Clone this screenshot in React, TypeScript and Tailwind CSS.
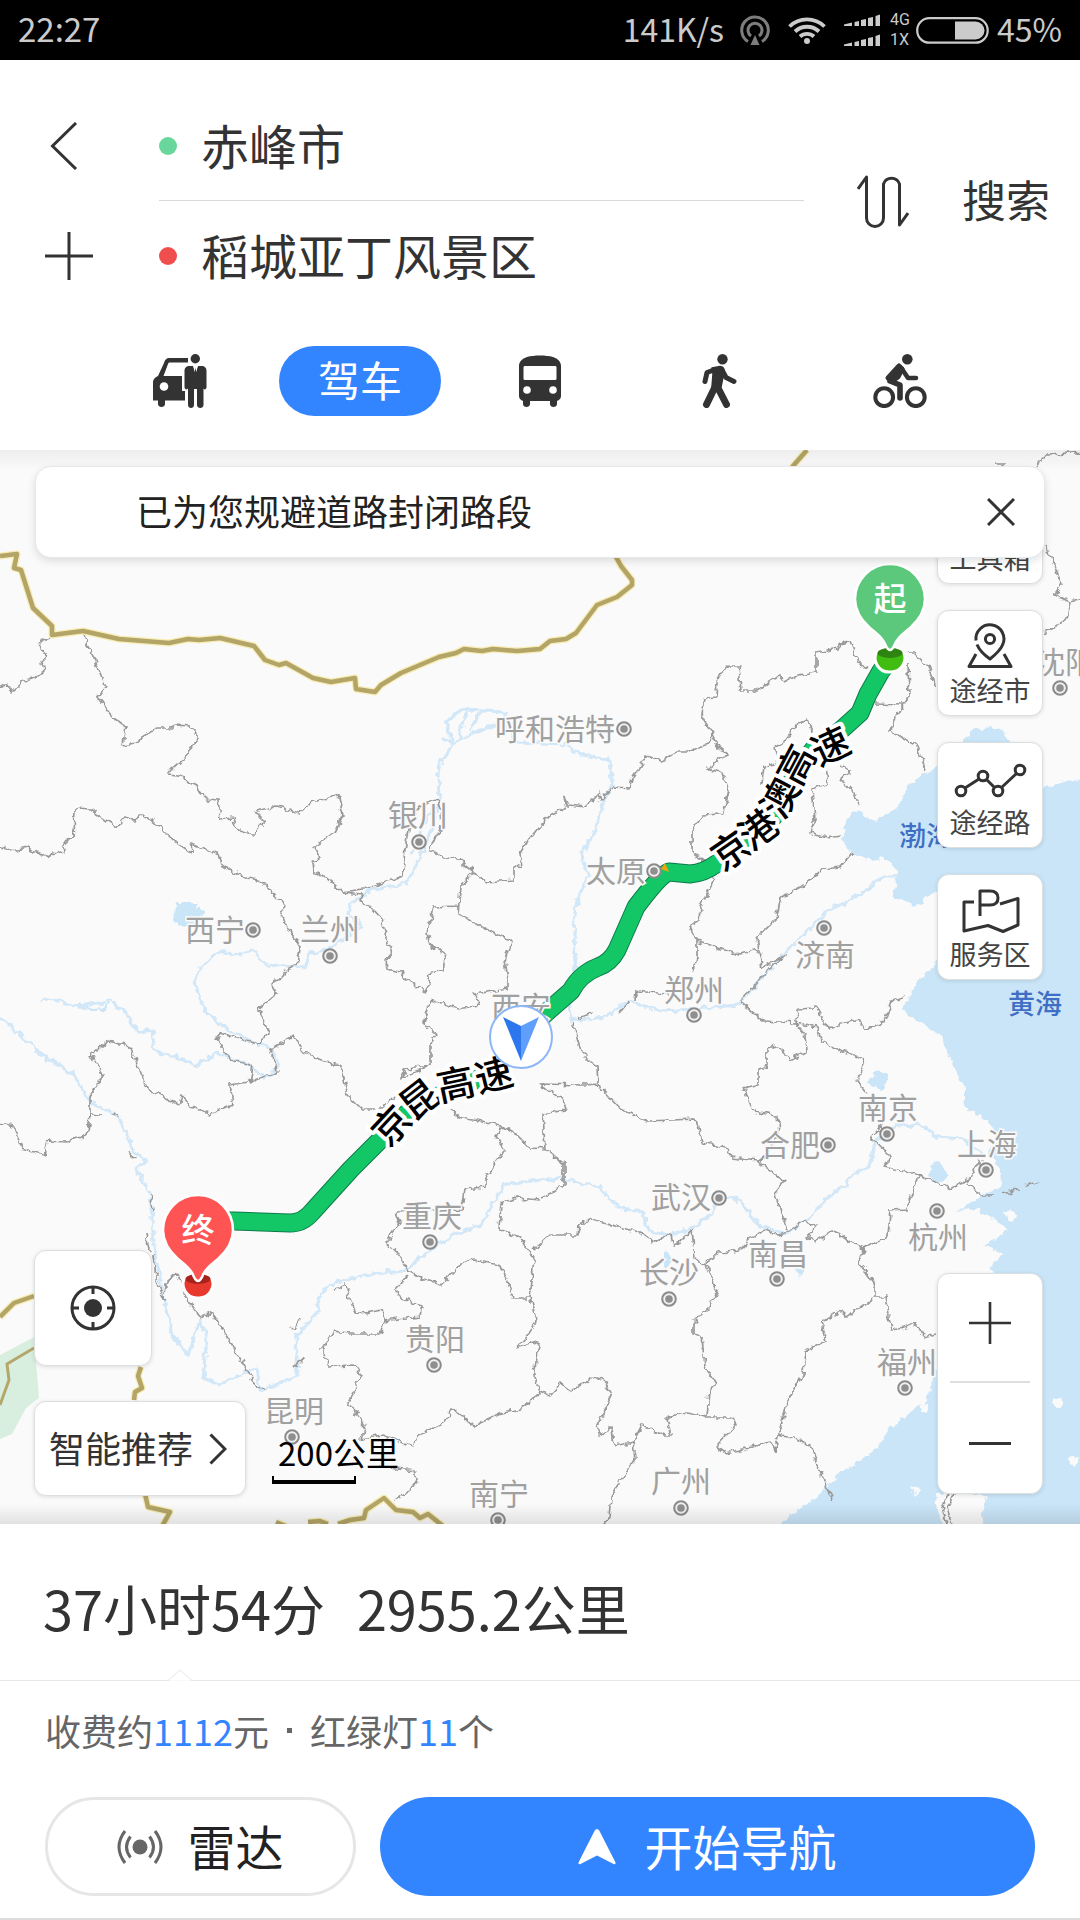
import { useState } from 'react';
import type { ReactNode } from 'react';

const fontStack = "font-['Noto_Sans_CJK_SC','Noto_Sans',sans-serif]";

type City = { name: string; x: number; y: number; dot?: [number, number] };

const cities: City[] = [
  { name: '呼和浩特', x: 555, y: 279, dot: [624, 279] },
  { name: '银川', x: 418, y: 365, dot: [419, 392] },
  { name: '西宁', x: 215, y: 480, dot: [253, 480] },
  { name: '兰州', x: 330, y: 479, dot: [330, 506] },
  { name: '太原', x: 616, y: 421, dot: [654, 421] },
  { name: '济南', x: 825, y: 505, dot: [824, 478] },
  { name: '沈阳', x: 1065, y: 212, dot: [1060, 238] },
  { name: '郑州', x: 694, y: 540, dot: [694, 565] },
  { name: '西安', x: 521, y: 557 },
  { name: '合肥', x: 790, y: 695, dot: [828, 695] },
  { name: '南京', x: 888, y: 658, dot: [887, 684] },
  { name: '上海', x: 987, y: 694, dot: [986, 720] },
  { name: '武汉', x: 681, y: 747, dot: [719, 748] },
  { name: '长沙', x: 669, y: 822, dot: [669, 849] },
  { name: '南昌', x: 778, y: 804, dot: [777, 829] },
  { name: '杭州', x: 938, y: 787, dot: [937, 761] },
  { name: '福州', x: 907, y: 912, dot: [905, 938] },
  { name: '广州', x: 681, y: 1031, dot: [681, 1058] },
  { name: '重庆', x: 432, y: 766, dot: [430, 792] },
  { name: '贵阳', x: 435, y: 889, dot: [434, 915] },
  { name: '昆明', x: 294, y: 961, dot: [292, 987] },
  { name: '南宁', x: 499, y: 1044, dot: [498, 1070] },
];

// [char, x, y, angle]
const roadNames: [string, number, number, number][] = [
  ['京', 731, 401, -35],
  ['港', 759, 380, -37],
  ['澳', 781, 348, -62],
  ['高', 797, 315, -62],
  ['速', 831, 297, -25],
  ['京', 392, 676, -47],
  ['昆', 420, 650, -38],
  ['高', 456, 635, -12],
  ['速', 494, 626, -14],
];

const sea =
  'M1110 329 1080 329 1067 331 1045 338 1010 350 985 330 1000 310 1010 290 998 278 974 279 960 293 936 319 922 324 905 338 903 350 891 362 876 371 855 360 845 376 843 391 852 403 871 410 884 408 898 421 893 445 915 457 936 441 1010 440 1025 455 985 480 936 513 919 530 902 560 922 574 940 584 953 616 965 637 965 660 983 667 1005 691 988 701 1000 719 1003 735 984 744 958 762 977 759 1008 780 984 796 1003 803 991 816 1000 850 960 900 936 919 926 951 902 969 888 980 878 998 840 1023 816 1048 788 1067 770 1090H1110Z';

const lakes = [
  'M177 453 195 453 205 464 193 474 180 476 173 467Z',
  'M867 634 876 619 888 626 884 639Z',
  'M929 716 938 710 950 725 940 734 931 728Z',
  'M795 817 805 819 800 828Z',
  'M664 801 673 809 664 820Z',
  'M83 554 96 560 110 552 104 561 92 561Z',
];

const rivers = [
  'M40 553 45 548 83 557 110 550 126 564 139 582 152 580 155 601 182 609 195 616 217 603 248 614 265 628 279 616 272 600 229 580 207 564 198 544 195 530 200 519 217 501 241 504 253 500 267 515 305 518 310 503 327 501 344 489 362 476 348 465 350 455 369 441 406 434 420 408 430 383 439 352 438 319 453 293 482 279 503 276 517 293 566 295 583 305 609 310 613 334 604 350 593 386 581 403 588 424 574 462 576 507 572 540 569 551 571 571 605 567 630 551 661 561 695 559 738 555 759 532 781 507 803 486 826 462 860 445 884 426 898 426',
  'M453 293 446 272 460 260 506 262 499 276M466 262 458 290M480 262 470 280M442 288 453 293M412 405 422 378 432 360',
  'M0 567 45 607 74 625 91 653 119 667 133 700 146 712 136 719 150 744 155 805 165 853 172 884 188 905 200 869 207 887 203 928 220 934 257 917 260 941 298 926 296 887 317 862 319 848 331 834 365 825 403 821 427 803 455 784 479 776 506 734 540 730 561 728 600 737 617 757 642 762 650 782 669 785 692 778 712 764 719 744 740 751 760 776 786 784 810 767 829 746 847 735 850 725 869 716 876 691 895 676 922 675 936 687 964 689 984 705',
];

const provinces = [
  'M52 186 41 191 40 198 46 207 42 214 44 221 34 228 24 230 12 242 6 234 0 237',
  'M83 183 106 237 98 248 111 266 126 276 123 295 138 293 146 283 157 278 172 278 176 275 189 276 196 283 196 291 183 310 172 319 167 325 179 326 197 335 200 343 207 349 218 350 220 369 234 368 237 379 246 383 255 383 265 372 256 363 277 356 299 363 312 352 335 346 339 348 343 365 334 383 314 396 319 408 313 411 314 422 324 426 343 442 362 444 360 451 372 458 382 469 386 486 392 503 386 510 387 519 401 522 406 530 413 534 425 542 430 534 427 524',
  'M343 442 375 437 386 431 398 429 403 420 405 400 408 379 418 361 422 355 437 350 441 360 442 376 436 386 430 400 444 408 458 409 474 422 487 432 514 430 514 415 522 417 520 403 529 389 540 376 552 365 566 358 564 346 569 355 585 357 599 343 601 350 612 337 630 338 634 326 647 306 661 312 676 302 688 302 710 293 711 283',
  'M711 283 702 265 705 248 716 247 717 231 728 216 739 216 741 241 757 241 779 225 785 232 798 225 816 222 816 202 838 198 840 193 850 191 860 214 869 219',
  'M711 283 719 297 728 304 719 310 707 319 723 324 729 341 723 364 702 365 692 384 692 403 704 411 714 429 700 458 699 470 690 476 697 491 697 507 693 524',
  'M697 491 740 505 759 500 757 488 776 469 781 448 802 436 822 419 840 417 852 403M759 500 762 517 785 505 771 517 760 530',
  'M774 297 785 290 795 276 807 269 812 279 806 300M778 312 764 317 762 331 768 342M774 297 778 312M826 317 828 334 812 340 815 369 810 383 826 388 841 386M840 315 850 321 840 329 853 341 860 357',
  'M908 214 909 247 903 255 874 254M903 255 890 281 917 295 926 321M908 204 915 204 929 217 935 236',
  'M1045 93 1062 135 1055 145 1070 152 1067 169 1045 183M1070 152 1090 148M1036 16 1048 4 1090 2M996 14 1006 14',
  'M0 395 10 401 29 398 48 408 52 402 65 404 64 393 74 388 75 359 91 360 116 377 124 367 134 371 142 365 153 371 172 390 194 404 191 393 219 405 222 415 238 425 261 431 285 456 280 464 289 479 300 498 297 515 288 519 279 530 272 534 276 544 258 559 269 582 258 594 220 583 216 589 231 609 253 616 250 632 277 621 270 600 294 585 303 603 341 616 348 646 362 659 384 659 396 646',
  'M429 617 401 628 406 619 430 616 430 594 437 585 424 573 430 550 458 559 480 555 474 544 508 539 508 530 505 510 511 491 482 477 458 465 458 456 433 457 427 482 430 496 446 503 443 520 427 524M458 465 460 438 474 422',
  'M248 632 229 635 232 655 210 664 193 659 182 644 179 655 148 639 129 596 108 591 91 605 103 625 90 646 90 664 88 684 67 692 48 691 45 705 21 698 14 676 0 673',
  'M90 664 102 665M112 664 121 667M129 703 137 710M151 746 153 760M146 784 149 800M153 805 157 834 164 850 165 834 177 823 189 851 200 867 212 862 241 910 257 939 265 938',
  'M451 659 458 667 501 676 517 685 530 698 545 699M501 676 496 687 505 700 486 728 486 737 465 739 462 759 396 762 400 773 386 792 400 805 408 821 422 828 441 835 462 812 475 809 501 816 513 848 530 848 534 809 520 787 499 780 501 753 517 748 540 750',
  'M408 826 396 839 401 848 422 855 420 866 384 871 382 859 355 864 346 835 334 840M384 871 379 884 348 884 334 882 322 898 329 917 355 916 361 925 348 953 365 975 362 989 382 985 413 996 418 985 444 973 453 959 474 976 499 964 520 959 540 944 534 923 540 891 517 898 537 873 530 848',
  'M379 1017 415 1021 417 1030 410 1041 396 1050M292 880 300 868M294 917 304 908',
  'M573 573 581 601 597 617 598 634 585 635 540 634 564 651 566 660 543 664 545 698 564 714 564 737 540 748M598 634 621 659 647 671 697 669 702 692 728 698 731 707 757 710 785 732 775 744 788 780',
  'M579 568 592 563M620 562 628 553M635 550 636 541 668 544',
  'M795 573 805 585 807 601 790 610 779 596 767 598 767 616 759 619 759 635 743 639 754 662 778 666 780 682 760 712',
  'M760 530 740 551 764 571 795 573 798 559 816 558 829 578 859 569 865 580 884 571 891 551 905 548',
  'M795 573 817 578 822 592 847 603 864 610 857 632 867 644M883 673 871 687 890 705 884 717 919 725 940 734 950 739 970 728 981 709M967 732 981 746 995 746M1003 744 1018 740M1026 736 1039 731',
  'M919 725 907 759 890 760 888 787 864 798 859 812 874 834 874 846 886 846 891 880 905 878 915 873 924 887 936 884',
  'M864 798 850 792 833 780 816 791 807 787 816 776 805 771 788 782 778 785 764 780 750 789 740 800 719 803 705 814 717 842 709 857 693 873 693 884 702 887 705 916 716 934 709 941 707 966',
  'M705 814 695 809 692 780 674 796 671 784 654 792 643 784 592 769 579 775 578 785 550 785 534 800',
  'M540 941 550 946 561 934 571 941 595 926 605 932 612 946 597 976 599 985 612 978 614 996 633 992 642 975 664 985 671 985 667 969 681 962 707 967 733 967 736 975 716 996 726 1003 771 992 776 1001 778 985 788 951 803 923 805 901 826 891 821 873 840 860 847 866 874 848',
  'M778 985 797 989 812 998 826 1037 834 1052M633 992 635 1009 621 1030 611 1048 609 1067 599 1084',
  'M949 1044 942 1058 950 1084M954 1044 947 1058 955 1084',
];

const nationalBorders = [
  'M0 106 17 104 14 118 21 120 33 158 52 176 52 185 83 181 119 189 169 193 188 189 199 190 220 188 254 196 265 210 279 215 286 213 313 228 331 232 355 228 356 239 375 242 381 235 401 223 439 207 456 203 464 199 482 201 493 199 517 201 540 199 550 191 566 189 576 183 597 155 617 147 632 135 632 130 621 116 616 107 640 80 760 60 793 16 807 0',
  'M0 867 14 853 34 846M141 917 138 926 142 938 135 942 134 950M145 1044 148 1057 170 1062 160 1080M276 1072 290 1078M308 1072 320 1071 328 1074M338 1074 350 1070 364 1068 366 1060 384 1048 396 1060 413 1062 420 1068 428 1064 443 1076',
];

const route =
  'M890 210 881 221 868 244 860 263 840 281 815 297 795 325 775 365 745 395 716 414Q704 423 690 424L669 422Q660 425 636 457L617 500Q610 513 598 517Q580 524 571 541L547 562 521 587 496 622 450 640 406 664 379 691 351 719 312 762Q303 773 290 773L234 771H198';

const cardClass =
  'rounded-xl border border-[#dcdfe0] bg-white shadow-[0_1px_4px_rgba(0,0,0,0.12)] cursor-pointer';

function RouteMap() {
  return (
    <svg
      viewBox="0 0 1080 1074"
      preserveAspectRatio="xMidYMid slice"
      className="absolute inset-0 h-full w-full"
      role="img"
      aria-label="路线地图"
    >
      <defs>
        <filter id="rough" x="-20" y="-20" width="1130" height="1120" filterUnits="userSpaceOnUse">
          <feTurbulence type="fractalNoise" baseFrequency="0.14" numOctaves="2" seed="4" />
          <feDisplacementMap in="SourceGraphic" scale="8" xChannelSelector="R" yChannelSelector="G" />
        </filter>
      </defs>
      <rect width="1080" height="1074" fill="#fafafa" />
      <path d="M0 905 34 887 39 948 26 958 12 984 0 989Z" fill="#d8efe0" />
      <g fill="#cae5f8" filter="url(#rough)">
        <path d={sea} />
        {lakes.map((d) => (
          <path key={d} d={d} />
        ))}
      </g>
      <g fill="#fafafa" filter="url(#rough)">
        <path d="M936 1044H986L984 1060 976 1090H948L938 1062Z" />
        <path d="M1004 762 1012 758 1019 768 1010 771Z" />
        <path d="M912 1036 920 1040 916 1048Z" />
        <circle cx="1058" cy="953" r="5" />
        <circle cx="1073" cy="1010" r="5" />
        <circle cx="924" cy="958" r="4" />
      </g>
      <g fill="none" stroke="#d2e7f7" strokeWidth="3" strokeLinejoin="round" filter="url(#rough)">
        {rivers.map((d) => (
          <path key={d} d={d} />
        ))}
      </g>
      <g fill="none" stroke="#999" strokeWidth="1.7" strokeLinejoin="round" filter="url(#rough)">
        {provinces.map((d) => (
          <path key={d} d={d} />
        ))}
      </g>
      <path d="M34 898 7 914 9 930 5 941 0 955" fill="none" stroke="#b5a76c" strokeWidth="3" />
      {nationalBorders.map((d) => (
        <g key={d} fill="none" strokeLinejoin="round">
          <path d={d} stroke="#f7ecb4" strokeWidth="7" />
          <path d={d} stroke="#b3a468" strokeWidth="4.5" />
        </g>
      ))}

      {/* 路线 */}
      <g fill="none" strokeLinejoin="round">
        <path d={route} stroke="#0c7a4c" strokeWidth="19" />
        <path d={route} stroke="#14c766" strokeWidth="17" />
      </g>
      <path d="M661 419 665 413 669 422Z" fill="#f0a30a" />

      {/* 城市 */}
      {cities.map((c) => (
        <g key={c.name}>
          <text
            x={c.x}
            y={c.y + 11}
            textAnchor="middle"
            fontSize="30"
            fill="#a0a0a0"
            stroke="#fafafa"
            strokeWidth="3"
            paintOrder="stroke"
          >
            {c.name}
          </text>
          {c.dot && (
            <g>
              <circle cx={c.dot[0]} cy={c.dot[1]} r="6.8" fill="#f0f0f0" stroke="#8a8a8a" strokeWidth="2" />
              <circle cx={c.dot[0]} cy={c.dot[1]} r="3.8" fill="#8f8f8f" />
            </g>
          )}
        </g>
      ))}
      <g fontSize="27" fontWeight="500" fill="#3f6fc4">
        <text x="899" y="396">渤海</text>
        <text x="1008" y="564">黄海</text>
      </g>

      <g fontSize="38" fontWeight="500" fill="#000" stroke="#fff" strokeWidth="8" strokeLinejoin="round" textAnchor="middle">
        {roadNames.map(([char, x, y, angle]) => (
          <text key={`${char}${x}`} paintOrder="stroke" transform={`translate(${x} ${y}) rotate(${angle})`} y="13">
            {char}
          </text>
        ))}
      </g>

      {/* 当前位置 */}
      <circle cx="521" cy="587" r="31" fill="#fff" stroke="#8db6f7" strokeWidth="2" />
      <path d="M503 567 521 576 521 611Z" fill="#2c76ee" />
      <path d="M539 567 521 576 521 611Z" fill="#5f9efb" />

      <MapPin x={890} y={149} ballY={59} label="起" fill="#5bc87b" ball="#41bd12" shade="#2f8411" />
      <MapPin x={198} y={780} ballY={54} label="终" fill="#ff5454" ball="#e8392f" shade="#a8231c" />
    </svg>
  );
}

type MapPinProps = { x: number; y: number; ballY: number; label: string; fill: string; ball: string; shade: string };

function MapPin({ x, y, ballY, label, fill, ball, shade }: MapPinProps) {
  return (
    <g transform={`translate(${x} ${y})`}>
      <g transform={`translate(0 ${ballY})`}>
        <path d="M-13 -7Q0 -14 13 -7A14 14 0 0 1 0 14A14 14 0 0 1 -13 -7Z" fill={ball} stroke="#fff" strokeWidth="3" />
        <ellipse cy="-5" rx="12.500" ry="5" fill={shade} />
      </g>
      <path
        d="M0 -35A35 35 0 0 1 35 0C35 12 29 21 20 29C10 37 6 41 4 47Q0 55 -4 47C-6 41 -10 37 -20 29C-29 21 -35 12 -35 0A35 35 0 0 1 0 -35Z"
        fill={fill}
        stroke="#fff"
        strokeWidth="2.5"
      />
      <text y="12" textAnchor="middle" fontSize="33" fontWeight="500" fill="#fff">
        {label}
      </text>
    </g>
  );
}

function SignalBars() {
  return (
    <svg width="38" height="12" viewBox="0 0 38 12" fill="currentColor">
      <path d="M0 12V10.500L8 8.500V12ZM10.500 12V8L15 7V12ZM17 12V6L22 5V12ZM24 12V4L29 3V12ZM31.500 12V2L36 0.500V12Z" />
    </svg>
  );
}

function StatusBar() {
  return (
    <div className="flex h-[60px] items-center bg-black px-[18px] text-[33px] leading-none text-[#cbcbcb]">
      <span className="flex-1 pb-1">22:27</span>
      <span className="pb-1 text-[32px]">141K/s</span>
      <svg className="ml-4" width="30" height="30" viewBox="0 0 30 30" fill="none" stroke="#7d7d7d" strokeWidth="3">
        <path d="M8 26.500A13.300 13.300 0 1 1 22 26.500" />
        <path d="M11 21A7 7 0 1 1 19 21" />
        <path d="M15 20 19.500 30H10.500Z" fill="#7d7d7d" stroke="none" />
      </svg>
      <svg className="ml-[18px]" width="38" height="28" viewBox="0 0 38 28" fill="none" stroke="currentColor" strokeWidth="3.800">
        <path d="M1.500 10.500A25 25 0 0 1 36.500 10.500" />
        <path d="M7 15.500A17.500 17.500 0 0 1 31 15.500" />
        <path d="M12 20.500A10.500 10.500 0 0 1 26 20.500" />
        <circle cx="19" cy="25" r="3" fill="currentColor" stroke="none" />
      </svg>
      <span className="ml-[18px] flex flex-col gap-2">
        <SignalBars />
        <SignalBars />
      </span>
      <span className="ml-2 flex flex-col font-['Roboto',sans-serif] text-base leading-5">
        <span>4G</span>
        <span>1X</span>
      </span>
      <svg className="ml-[6px]" width="73" height="27" viewBox="0 0 73 27" fill="none">
        <rect x="1.200" y="1.200" width="70.500" height="24.500" rx="12.200" stroke="currentColor" strokeWidth="2.200" />
        <path d="M39 4.500H59.500A9 9 0 0 1 59.500 22.500H39Z" fill="currentColor" />
      </svg>
      <span className="ml-2 pb-1 text-[32px]">45%</span>
    </div>
  );
}

function PlusIcon({ size }: { size: number }) {
  return (
    <svg width={size} height={size} viewBox="0 0 48 48" fill="none" stroke="#333" strokeWidth="3">
      <path d="M0 24H48M24 0V48" />
    </svg>
  );
}

const modes: { id: string; label: string; icon: ReactNode }[] = [
  {
    id: 'taxi',
    label: '打车',
    icon: (
      <svg width="54" height="54" viewBox="0 0 54 54" fill="#333">
        <path d="M35 4H17C13 4 12 6 11 9L5 22C1 24 0 26 0 29V46.500H5V50C5 54 12 54 12 50V46.500H32V37H29V22H10.500L15 10C15.400 8.800 16 8.500 17 8.500H35Z" />
        <circle cx="11" cy="32.500" r="4.300" fill="#fff" />
        <circle cx="42.300" cy="4.700" r="4.700" />
        <path d="M37 12H40L42.500 20 45 12H48C52 12 53.500 14 53.500 17V33C53.500 36 50.500 36 50.500 34V51C50.500 55 44 55 44 51V35H41V51C41 55 35 55 35 51V34C35 36 31.500 36 31.500 33V17C31.500 14 33 12 37 12Z" />
        <path d="M40.500 12H44.500L42.500 20.500Z" fill="#fff" />
        <path d="M42.500 13.500 43.500 19 42.500 21 41.500 19Z" />
      </svg>
    ),
  },
  { id: 'drive', label: '驾车', icon: null },
  {
    id: 'bus',
    label: '公交',
    icon: (
      <svg width="44" height="54" viewBox="0 0 44 54" fill="#333">
        <path
          fillRule="evenodd"
          d="M9 3C16 1 28 1 35 3C40 4.500 43 8 43 12V42C43 45 41 46 39 47V50C39 54 32 54 32 50V47H12V50C12 54 5 54 5 50V47C3 46 1 45 1 42V12C1 8 4 4.500 9 3ZM7 12C6 12 5.500 12.500 5.500 13.500V24.500C5.500 25.500 6 26 7 26H37C38 26 38.500 25.500 38.500 24.500V13.500C38.500 12.500 38 12 37 12Z"
        />
        <circle cx="9" cy="36" r="3.800" fill="#fff" />
        <circle cx="35" cy="36" r="3.800" fill="#fff" />
      </svg>
    ),
  },
  {
    id: 'walk',
    label: '步行',
    icon: (
      <svg width="36" height="54" viewBox="0 0 36 54" fill="none" stroke="#333" strokeLinecap="round" strokeLinejoin="round">
        <circle cx="20.500" cy="5.200" r="5.200" fill="#333" stroke="none" />
        <path d="M13 15.500 5 18.500 3 27.500" strokeWidth="5" />
        <path d="M20 16 24 23.500 32 27.500" strokeWidth="5" />
        <path d="M10 14 18 12.500Q22.500 13 22 18L19 33H10L11 20Z" fill="#333" strokeWidth="1.500" />
        <path d="M13 33 4.500 50.500M15 32 24.500 50.500" strokeWidth="7" />
      </svg>
    ),
  },
  {
    id: 'bike',
    label: '骑行',
    icon: (
      <svg width="54" height="54" viewBox="0 0 54 54" fill="none" stroke="#333" strokeLinecap="round" strokeLinejoin="round">
        <circle cx="11.200" cy="43.200" r="8.900" strokeWidth="4" />
        <circle cx="42.800" cy="43.200" r="8.900" strokeWidth="4" />
        <circle cx="34.300" cy="5.300" r="5.300" fill="#333" stroke="none" />
        <path d="M26 12 15 24 19 27 25 23 29 15Z" fill="#333" strokeWidth="5" />
        <path d="M29 15 35 24H43" strokeWidth="4.600" />
        <path d="M17 27 27 31V44" strokeWidth="5.600" />
      </svg>
    ),
  },
];

function SearchHeader() {
  const [mode, setMode] = useState('drive');

  return (
    <header className="bg-white pt-[31px] pb-[34px] text-[#333]">
      <div className="flex items-center pr-[30px]">
        <div className="flex w-[159px] flex-col pl-[45px]">
          <button aria-label="返回" className="flex h-[110px] items-center cursor-pointer">
            <svg width="48" height="48" viewBox="0 0 48 48" fill="none" stroke="#333" strokeWidth="3">
              <path d="M31 1 7.500 24 31 47" />
            </svg>
          </button>
          <button aria-label="添加途经点" className="flex h-[110px] items-center cursor-pointer">
            <PlusIcon size={48} />
          </button>
        </div>

        <div className="min-w-0 flex-1 text-5xl">
          <label className="flex h-[110px] items-center border-b border-[#d9d9d9]">
            <span className="h-[18px] w-[18px] shrink-0 rounded-full bg-[#69d79b]" />
            <input aria-label="起点" defaultValue="赤峰市" className="ml-6 h-[76px] w-full min-w-0 pb-1 outline-none" />
          </label>
          <label className="flex h-[110px] items-center">
            <span className="h-[18px] w-[18px] shrink-0 rounded-full bg-[#f04e4e]" />
            <input aria-label="终点" defaultValue="稻城亚丁风景区" className="ml-6 h-[76px] w-full min-w-0 pb-1 outline-none" />
          </label>
        </div>

        <button aria-label="交换起终点" className="mx-[53px] cursor-pointer">
          <svg width="52" height="54" viewBox="0 0 52 54" fill="none" stroke="#333" strokeWidth="3" strokeLinejoin="round">
            <path d="M1 15 9.500 3V44A8.500 8.500 0 0 0 26.500 44V10A8.500 8.500 0 0 1 42.500 10V51L51 39" />
          </svg>
        </button>
        <button className="pb-1 text-[44px] leading-none cursor-pointer">搜索</button>
      </div>

      <nav className="grid grid-cols-5 px-[90px] pt-[35px]">
        {modes.map((m) => (
          <button
            key={m.id}
            aria-label={m.label}
            aria-pressed={mode === m.id}
            onClick={() => setMode(m.id)}
            className="flex h-[70px] items-center justify-center cursor-pointer"
          >
            {m.icon ?? (
              <span className="flex h-[70px] w-[162px] items-center justify-center rounded-full bg-[#3385ff] pb-1 text-[42px] leading-none text-white">
                {m.label}
              </span>
            )}
          </button>
        ))}
      </nav>
    </header>
  );
}

const railItems: { label: string; icon: ReactNode }[] = [
  { label: '工具箱', icon: <path d="M8 16H52V42H8ZM22 16V8H38V16M8 28H52" /> },
  {
    label: '途经市',
    icon: (
      <>
        <path d="M16 17.500A14 14 0 1 1 42.500 22Q40 28 30 36Q20 29 17 21.500" />
        <circle cx="30" cy="16" r="4.600" />
        <path d="M16 31 9 43.500H51L44 31" />
      </>
    ),
  },
  {
    label: '途经路',
    icon: (
      <>
        <circle cx="1" cy="36" r="4.800" />
        <circle cx="23" cy="21" r="4.800" />
        <circle cx="38" cy="36" r="4.800" />
        <circle cx="60" cy="15" r="4.800" />
        <path d="M5 33 19 24M26.500 24.500 34.500 32.500M41.500 32.500 56.500 18.500" />
      </>
    ),
  },
  {
    label: '服务区',
    icon: (
      <>
        <path d="M14 15H4V44L28 38.500 43 44.500 58 38V11.500L40 17" />
        <path d="M20 29V4H30Q38 4 38 11Q38 18 30 18H20" />
      </>
    ),
  },
];

function ToolRail() {
  return (
    <div className="absolute top-7 right-[37px] flex flex-col gap-[26px]">
      {railItems.map((item) => (
        <button key={item.label} className={`flex h-[106px] w-[106px] flex-col items-center pt-3 ${cardClass}`}>
          <svg
            width="60"
            height="48"
            viewBox="0 0 60 48"
            className="overflow-visible"
            fill="none"
            stroke="#333"
            strokeWidth="3"
            strokeLinejoin="round"
          >
            {item.icon}
          </svg>
          <span className="pt-[3px] text-[27px] leading-8 text-[#444]">{item.label}</span>
        </button>
      ))}
    </div>
  );
}

export default function App() {
  const [noticeOpen, setNoticeOpen] = useState(true);

  return (
    <div className={`flex min-h-screen flex-col bg-white ${fontStack}`}>
      <StatusBar />
      <SearchHeader />

      <main className="relative min-h-[900px] flex-1 overflow-hidden bg-[#fafafa]">
        <RouteMap />
        <div className="absolute inset-x-0 top-0 h-5 bg-linear-to-b from-black/5 to-transparent" />
        <div className="absolute inset-x-0 bottom-0 h-5 bg-linear-to-t from-black/10 to-transparent" />
        <ToolRail />

        {noticeOpen && (
          <div className="absolute inset-x-[35px] top-4 flex h-[92px] items-center justify-between rounded-2xl border border-[#e6e9ea] bg-white pr-[29px] pl-[100px] shadow-[0_3px_8px_rgba(0,0,0,0.12)]">
            <span className="pb-1 text-4xl leading-none text-[#222]">已为您规避道路封闭路段</span>
            <button aria-label="关闭" onClick={() => setNoticeOpen(false)} className="cursor-pointer">
              <svg width="28" height="28" viewBox="0 0 28 28" fill="none" stroke="#333" strokeWidth="3">
                <path d="M1 1 27 27M27 1 1 27" />
              </svg>
            </button>
          </div>
        )}

        <div className="absolute bottom-7 left-[34px] flex items-end">
          <div className="flex flex-col gap-[35px]">
            <button aria-label="定位" className={`flex h-[116px] w-[118px] items-center justify-center ${cardClass}`}>
              <svg width="46" height="46" viewBox="0 0 46 46" fill="none" stroke="#333" strokeWidth="3">
                <circle cx="23" cy="23" r="21" />
                <circle cx="23" cy="23" r="9" fill="#333" stroke="none" />
                <path d="M23 2V9M23 37V44M2 23H9M37 23H44" />
              </svg>
            </button>
            <button
              className={`flex h-[95px] w-[212px] items-center justify-between pr-[18px] pl-[14px] text-4xl leading-none text-[#333] ${cardClass}`}
            >
              <span className="pb-1">智能推荐</span>
              <svg width="18" height="32" viewBox="0 0 18 32" fill="none" stroke="#333" strokeWidth="3">
                <path d="M1.500 1.500 16 16 1.500 30.500" />
              </svg>
            </button>
          </div>
          <div className="mb-3 ml-[26px]">
            <div className="pb-1 pl-[6px] text-[33px] leading-10 text-black">200公里</div>
            <div className="h-2 w-[84px] border-x-2 border-b-4 border-black" />
          </div>
        </div>

        <div className={`absolute right-[37px] bottom-[30px] flex h-[221px] w-[106px] flex-col px-3 ${cardClass}`}>
          <button aria-label="放大" className="flex flex-1 items-center justify-center border-b-2 border-[#dedede] pb-2 cursor-pointer">
            <PlusIcon size={42} />
          </button>
          <button aria-label="缩小" className="flex flex-1 items-center justify-center pt-3 cursor-pointer">
            <svg width="42" height="4" viewBox="0 0 42 4">
              <rect width="42" height="3" fill="#333" />
            </svg>
          </button>
        </div>
      </main>

      <section className="border-b-2 border-[#dcdcdc] bg-white pb-[22px]">
        <div className="relative flex h-[157px] items-center gap-8 border-b border-[#e6e6e6] px-[43px] pt-3 text-[54px] leading-none text-[#333]">
          <span>37小时54分</span>
          <span>2955.2公里</span>
          <svg className="absolute -bottom-px left-[168px]" width="24" height="12" viewBox="0 0 24 12" fill="#fff" stroke="#e6e6e6">
            <path d="M0 11.500 12 1 24 11.500" />
            <path d="M1.500 12H22.500" stroke="#fff" />
          </svg>
        </div>

        <div className="flex h-[116px] items-center gap-[18px] px-[45px] pb-[18px] text-4xl leading-none text-[#666]">
          <span>
            收费约<span className="text-[#3385ff]">1112</span>元
          </span>
          <span className="h-[5px] w-[5px] bg-[#666]" />
          <span>
            红绿灯<span className="text-[#3385ff]">11</span>个
          </span>
        </div>

        <div className="flex gap-6 px-[45px] text-5xl leading-none">
          <button className="flex h-[99px] w-[311px] items-center justify-center gap-6 rounded-full border-[3px] border-[#e6e6e6] bg-white text-[#222] cursor-pointer">
            <svg width="46" height="34" viewBox="0 0 46 34" fill="none" stroke="#666" strokeWidth="3">
              <circle cx="23" cy="17" r="7.500" fill="#666" stroke="none" />
              <path d="M13.500 6.500Q5.500 17 13.500 27.500M32.500 6.500Q40.500 17 32.500 27.500" />
              <path d="M8 1Q-4 17 8 33M38 1Q50 17 38 33" />
            </svg>
            <span className="pb-1">雷达</span>
          </button>
          <button className="flex h-[99px] flex-1 items-center justify-center gap-7 rounded-full bg-[#3385ff] text-white cursor-pointer">
            <svg width="38" height="36" viewBox="0 0 38 36" fill="#fff">
              <path d="M19 0Q20.500 0 21.500 2L37.500 33.500Q38 36 35.500 35L19 26.500 2.500 35Q0 36 0.500 33.500L16.500 2Q17.500 0 19 0Z" />
            </svg>
            <span className="pb-1">开始导航</span>
          </button>
        </div>
      </section>
    </div>
  );
}
